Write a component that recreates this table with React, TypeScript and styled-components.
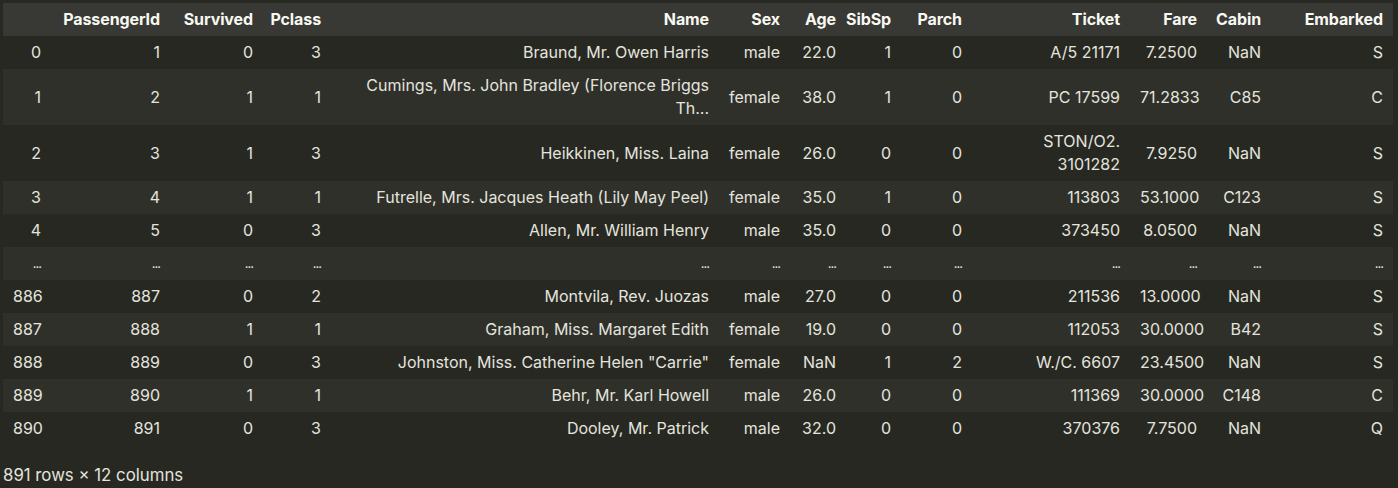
import React from "react";
import styled, { createGlobalStyle } from "styled-components";

const GlobalStyle = createGlobalStyle`
  html, body {
    margin: 0;
    padding: 0;
    background: #272822;
  }
  body {
    font-family: Inter, "Liberation Sans", sans-serif;
    color: #e4e4de;
  }
`;

interface Column {
  key: string;
  label: string;
  width: number;
}

const columns: Column[] = [
  { key: "idx", label: "", width: 48 },
  { key: "PassengerId", label: "PassengerId", width: 119 },
  { key: "Survived", label: "Survived", width: 93 },
  { key: "Pclass", label: "Pclass", width: 68 },
  { key: "Name", label: "Name", width: 388 },
  { key: "Sex", label: "Sex", width: 71 },
  { key: "Age", label: "Age", width: 56 },
  { key: "SibSp", label: "SibSp", width: 55 },
  { key: "Parch", label: "Parch", width: 71 },
  { key: "Ticket", label: "Ticket", width: 158 },
  { key: "Fare", label: "Fare", width: 77 },
  { key: "Cabin", label: "Cabin", width: 64 },
  { key: "Embarked", label: "Embarked", width: 122 },
];

const rows: string[][] = [
  ["0", "1", "0", "3", "Braund, Mr. Owen Harris", "male", "22.0", "1", "0", "A/5 21171", "7.2500", "NaN", "S"],
  ["1", "2", "1", "1", "Cumings, Mrs. John Bradley (Florence Briggs Th...", "female", "38.0", "1", "0", "PC 17599", "71.2833", "C85", "C"],
  ["2", "3", "1", "3", "Heikkinen, Miss. Laina", "female", "26.0", "0", "0", "STON/O2. 3101282", "7.9250", "NaN", "S"],
  ["3", "4", "1", "1", "Futrelle, Mrs. Jacques Heath (Lily May Peel)", "female", "35.0", "1", "0", "113803", "53.1000", "C123", "S"],
  ["4", "5", "0", "3", "Allen, Mr. William Henry", "male", "35.0", "0", "0", "373450", "8.0500", "NaN", "S"],
  ["...", "...", "...", "...", "...", "...", "...", "...", "...", "...", "...", "...", "..."],
  ["886", "887", "0", "2", "Montvila, Rev. Juozas", "male", "27.0", "0", "0", "211536", "13.0000", "NaN", "S"],
  ["887", "888", "1", "1", "Graham, Miss. Margaret Edith", "female", "19.0", "0", "0", "112053", "30.0000", "B42", "S"],
  ["888", "889", "0", "3", "Johnston, Miss. Catherine Helen \"Carrie\"", "female", "NaN", "1", "2", "W./C. 6607", "23.4500", "NaN", "S"],
  ["889", "890", "1", "1", "Behr, Mr. Karl Howell", "male", "26.0", "0", "0", "111369", "30.0000", "C148", "C"],
  ["890", "891", "0", "3", "Dooley, Mr. Patrick", "male", "32.0", "0", "0", "370376", "7.7500", "NaN", "Q"],
];

const Output = styled.div`
  padding: 3px 5px 0 3px;
`;

const Frame = styled.table`
  table-layout: fixed;
  width: 1390px;
  border-collapse: collapse;
  border-spacing: 0;
  font-size: 16px;
  line-height: 23px;
`;

const Col = styled.col<{ $w: number }>`
  width: ${(p) => p.$w}px;
`;

const HeadRow = styled.tr`
  background: #383934;
`;

const BodyRow = styled.tr`
  &:nth-child(even) {
    background: #2f302a;
  }
`;

const HeadCell = styled.th`
  padding: 5px 10px;
  vertical-align: middle;
  font-weight: 700;
  color: #f8f8f2;
`;

const HeadLabel = styled.span`
  display: flex;
  justify-content: flex-end;
  white-space: nowrap;
  letter-spacing: -0.1px;
`;

const Cell = styled.td<{ $dots?: boolean }>`
  padding: 5px 10px;
  text-align: right;
  vertical-align: middle;
  font-weight: 400;
  color: #e4e4de;
  font-size: ${(p) => (p.$dots ? "13px" : "16px")};
  letter-spacing: ${(p) => (p.$dots ? "-1px" : "normal")};
`;

const Footer = styled.div`
  padding-top: 18px;
  font-size: 16.8px;
  line-height: 24px;
  color: #e4e4de;
`;

export default function App() {
  return (
    <>
      <GlobalStyle />
      <Output>
        <Frame>
          <colgroup>
            {columns.map((c) => (
              <Col key={c.key} $w={c.width} />
            ))}
          </colgroup>
          <thead>
            <HeadRow>
              {columns.map((c) => (
                <HeadCell key={c.key}>
                  <HeadLabel>{c.label}</HeadLabel>
                </HeadCell>
              ))}
            </HeadRow>
          </thead>
          <tbody>
            {rows.map((r, i) => (
              <BodyRow key={i}>
                {r.map((v, j) => (
                  <Cell key={j} $dots={v === "..."}>
                    {v}
                  </Cell>
                ))}
              </BodyRow>
            ))}
          </tbody>
        </Frame>
        <Footer>891 rows × 12 columns</Footer>
      </Output>
    </>
  );
}
